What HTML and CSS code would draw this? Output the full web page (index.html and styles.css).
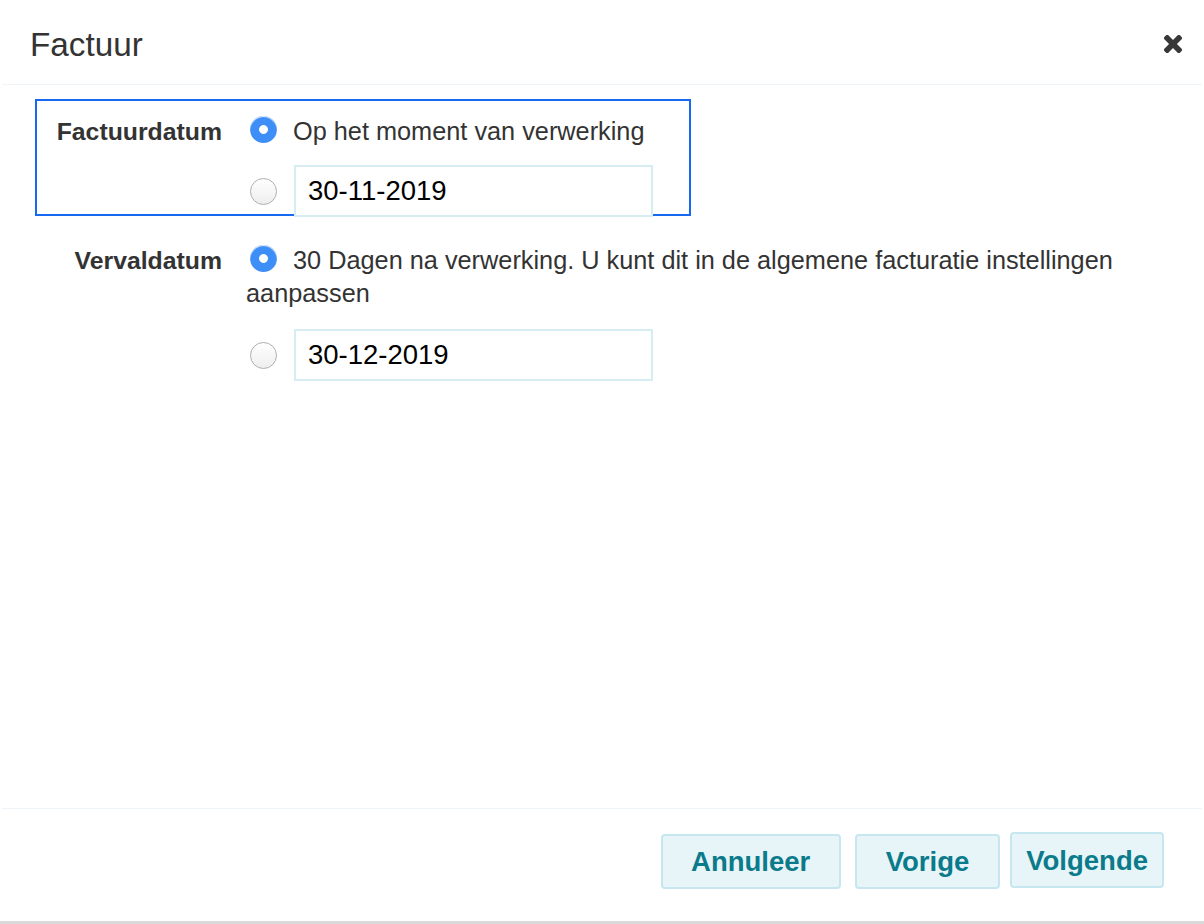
FILE: index.html
```html
<!DOCTYPE html>
<html lang="nl">
<head>
<meta charset="utf-8">
<title>Factuur</title>
<link rel="stylesheet" href="styles.css">
</head>
<body>
<div class="dialog">
  <header class="dialog-header">
    <h1 class="dialog-title">Factuur</h1>
    <button class="close" aria-label="Sluiten">
      <svg width="18" height="18" viewBox="0 0 18 18" aria-hidden="true">
        <rect x="-2" y="6.2" width="22" height="5.6" rx="1.6" transform="rotate(45 9 9)" fill="#383838"/>
        <rect x="-2" y="6.2" width="22" height="5.6" rx="1.6" transform="rotate(-45 9 9)" fill="#383838"/>
      </svg>
    </button>
  </header>

  <main class="dialog-body">
    <div class="group group-focus">
      <div class="label">Factuurdatum</div>
      <div class="field">
        <div class="line"><span class="radio checked"></span><span class="gap"></span>Op het moment van verwerking</div>
        <div class="date-row date-row-first">
          <span class="radio"></span>
          <div class="input">30-11-2019</div>
        </div>
      </div>
    </div>

    <div class="group group-plain">
      <div class="label">Vervaldatum</div>
      <div class="field">
        <div class="line"><span class="radio checked"></span><span class="gap"></span>30 Dagen na verwerking. U kunt dit in de algemene facturatie instellingen aanpassen</div>
        <div class="date-row date-row-second">
          <span class="radio"></span>
          <div class="input">30-12-2019</div>
        </div>
      </div>
    </div>
  </main>

  <footer class="dialog-footer">
    <button class="btn btn-wide btn-low btn-cancel">Annuleer</button>
    <button class="btn btn-wide btn-low btn-prev">Vorige</button>
    <button class="btn btn-narrow">Volgende</button>
  </footer>
  <div class="bottom-bar"></div>
</div>
</body>
</html>
```

FILE: styles.css
```css
* { box-sizing: border-box; }

html, body {
  margin: 0;
  padding: 0;
  background: #ffffff;
}

body {
  font-family: "Liberation Sans", Arial, sans-serif;
  color: #333333;
}

.dialog {
  height: 924px;
  display: flex;
  flex-direction: column;
}

.dialog-header {
  height: 85px;
  margin: 0 2px;
  padding: 27px 20px 0 28px;
  border-bottom: 1px solid #eef4f7;
  display: flex;
  justify-content: space-between;
  align-items: flex-start;
}

.dialog-title {
  margin: 0;
  font-size: 33.3px;
  line-height: 36px;
  font-weight: normal;
  color: #333333;
}

.close {
  margin: 8px 0 0 0;
  padding: 0;
  border: 0;
  background: none;
  width: 18px;
  height: 18px;
  display: block;
}

.close svg { display: block; }

.dialog-body {
  flex: 1;
  padding: 14px 30px 0 35px;
}

.group {
  display: grid;
  grid-template-columns: 209px 1fr;
  border: 2px solid transparent;
  padding-top: 14px;
}

.group-focus {
  width: 656px;
  border-color: #1669f0;
}

.group-plain {
  margin-top: 12px;
}

.label {
  font-weight: bold;
  font-size: 24.8px;
  line-height: 33px;
  text-align: right;
  padding-right: 24px;
  color: #333333;
}

.field {
  font-size: 25.3px;
  line-height: 33px;
  color: #333333;
}

.radio {
  display: inline-block;
  width: 27px;
  height: 27px;
  border-radius: 50%;
  margin-left: 4px;
  vertical-align: -3px;
  background: linear-gradient(#ffffff, #eeeeee);
  border: 1px solid #aeaeae;
  box-shadow: inset 0 1px 1px rgba(255,255,255,0.9);
}

.radio.checked {
  border: 0;
  background: radial-gradient(circle, #ffffff 0, #ffffff 4px, #3d8ef6 4.8px);
}

.gap {
  display: inline-block;
  width: 16px;
}

.date-row {
  display: flex;
  align-items: center;
  margin-top: 17px;
}

.date-row-first {
  margin-bottom: -3px;
}

.date-row-second {
  margin-top: 19px;
}

.date-row .radio {
  vertical-align: baseline;
  flex: none;
}

.input {
  margin-left: 17px;
  width: 359px;
  height: 52px;
  border: 2px solid #d5edf3;
  padding: 0 12px;
  font-size: 27.5px;
  line-height: 48px;
  color: #000000;
  background: #ffffff;
}

.dialog-footer {
  height: 113px;
  margin: 0 2px;
  border-top: 1px solid #eef4f7;
  padding: 23px 38px 0 0;
  display: flex;
  justify-content: flex-end;
  align-items: flex-start;
}

.btn {
  font-family: "Liberation Sans", Arial, sans-serif;
  font-weight: bold;
  font-size: 27.5px;
  line-height: 33px;
  color: #0b7b8b;
  background: #e7f5f9;
  border: 2px solid #c6e7ef;
  border-radius: 4px;
  height: 56px;
  padding: 0;
}

.btn-wide {
  padding: 0 29px;
  height: 55px;
}

.btn-low {
  margin-top: 2px;
}

.btn-cancel {
  padding: 0 28.5px;
  margin-right: 14px;
}

.btn-prev {
  margin-right: 10px;
}

.btn-narrow {
  padding: 0 14px;
}

.bottom-bar {
  height: 3px;
  background: #d9d9d9;
}
```
